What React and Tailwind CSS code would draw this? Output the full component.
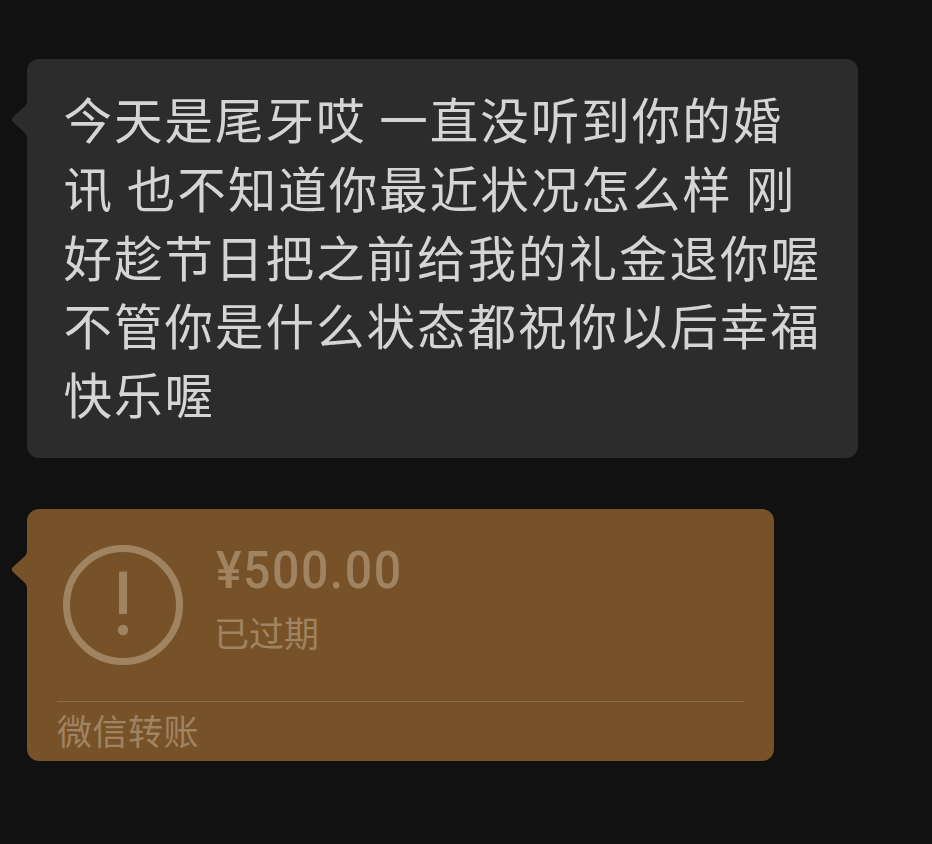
const lines = [
    "今天是尾牙哎 一直没听到你的婚",
    "讯 也不知道你最近状况怎么样 刚",
    "好趁节日把之前给我的礼金退你喔",
    "不管你是什么状态都祝你以后幸福",
    "快乐喔",
];

function Tail({ className }) {
    return (
        <svg
            className={`absolute -left-4 w-[17px] h-11 ${className}`}
            viewBox="0 0 17 44"
            fill="currentColor"
        >
            <path d="M17 1h-1q0 4-2 6L2 18q-2.500 2.500 0 5L14 34q2 2 2 6h1z" />
        </svg>
    );
}

function TextMessage() {
    return (
        <div className="relative w-[831px] h-[399px] rounded-xl bg-[#2c2c2c] pl-[36.5px] pt-[25px] text-[#d5d5d5]">
            <Tail className="top-[40px] text-[#2c2c2c]" />
            {lines.map((line) => (
                <p
                    key={line}
                    className="h-[68.75px] whitespace-pre text-[48.5px] leading-[68.75px] tracking-[2px]"
                >
                    {line}
                </p>
            ))}
        </div>
    );
}

function TransferCard() {
    return (
        <div className="relative w-[747px] h-[252px] rounded-xl bg-[#775229] text-[#a08361]">
            <Tail className="top-[40px] text-[#775229]" />
            <div className="flex h-[192px] pl-9 pt-9">
                <svg
                    className="size-[120px] shrink-0"
                    viewBox="0 0 120 120"
                    fill="none"
                >
                    <circle
                        cx="60"
                        cy="60"
                        r="56.500"
                        stroke="currentColor"
                        strokeWidth="7"
                    />
                    <path d="M56 26.500h8V69h-8z" fill="currentColor" />
                    <circle cx="60" cy="85" r="5.200" fill="currentColor" />
                </svg>
                <div className="pl-8 -mt-0.5">
                    <p className="ml-px origin-left scale-x-[0.945] font-['Roboto'] font-medium text-[51px] leading-[56px] tracking-[1.6px]">
                        ¥500.00
                    </p>
                    <p className="-ml-px text-[35px] leading-[66px]">已过期</p>
                </div>
            </div>
            <div className="mx-[30px] border-t border-[#8f6d43]">
                <p className="text-[35px] leading-[56px] tracking-[0.5px]">
                    微信转账
                </p>
            </div>
        </div>
    );
}

export default function App() {
    return (
        <div className="flex flex-col w-[932px] h-[844px] overflow-hidden bg-[#111111] pl-[27px] pt-[59px] gap-[51px] font-['Noto_Sans_CJK_SC',sans-serif]">
            <TextMessage />
            <TransferCard />
        </div>
    );
}
